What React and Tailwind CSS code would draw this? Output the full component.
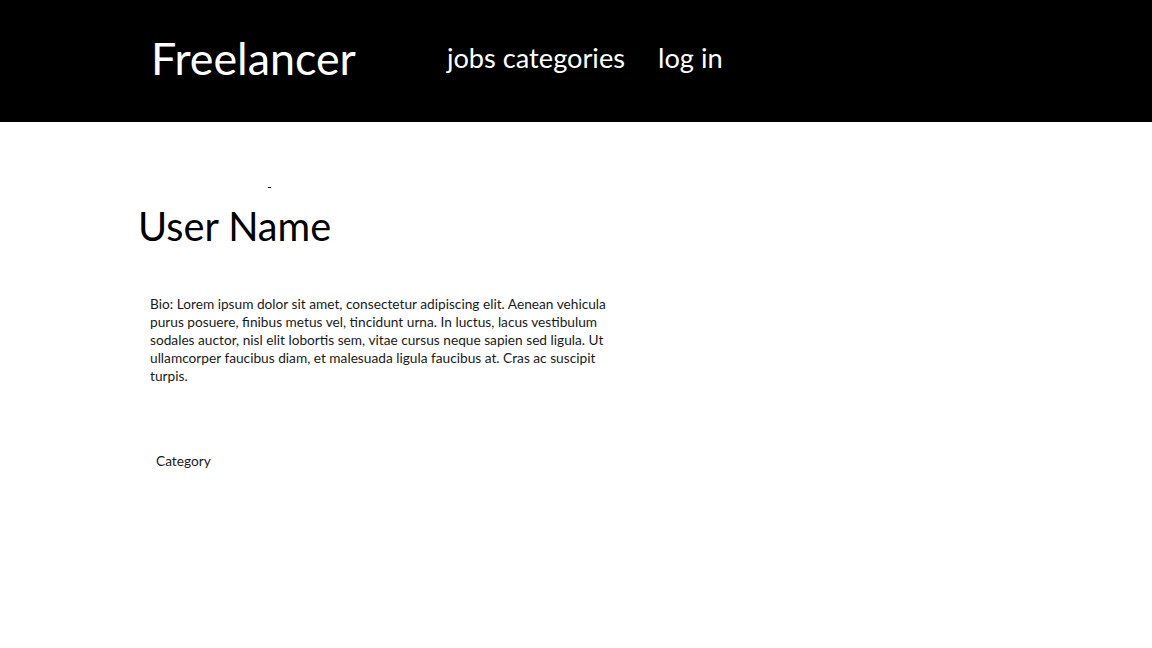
export default function App() {
  const font = { fontFamily: "Lato, 'Open Sans', sans-serif" };
  return (
    <div className="w-[1152px] h-[648px] bg-white overflow-hidden" style={font}>
      <header className="h-[122px] bg-black flex items-center text-white">
        <div className="ml-[151px] text-[44.8px] leading-none pb-[6px]">Freelancer</div>
        <nav className="ml-[91px] flex items-center gap-[33px] text-[27.2px] leading-none pb-[6px]">
          <span>jobs categories</span>
          <span>log in</span>
        </nav>
      </header>
      <main className="pl-[138px]">
        <div className="h-[84px] relative">
          <span className="absolute left-[130px] top-[65px] w-[3px] h-[1px] bg-black" />
        </div>
        <h1 className="text-[39.7px] leading-none text-black">User Name</h1>
        <p className="mt-[49px] ml-[12px] text-[13.7px] leading-[18px] text-[#1a1a1a] whitespace-nowrap">
          Bio: Lorem ipsum dolor sit amet, consectetur adipiscing elit. Aenean vehicula<br />
          purus posuere, finibus metus vel, tincidunt urna. In luctus, lacus vestibulum<br />
          sodales auctor, nisl elit lobortis sem, vitae cursus neque sapien sed ligula. Ut<br />
          ullamcorper faucibus diam, et malesuada ligula faucibus at. Cras ac suscipit<br />
          turpis.
        </p>
        <div className="mt-[67px] ml-[18px] text-[13.7px] leading-[18px] text-[#1a1a1a]">Category</div>
      </main>
    </div>
  );
}
